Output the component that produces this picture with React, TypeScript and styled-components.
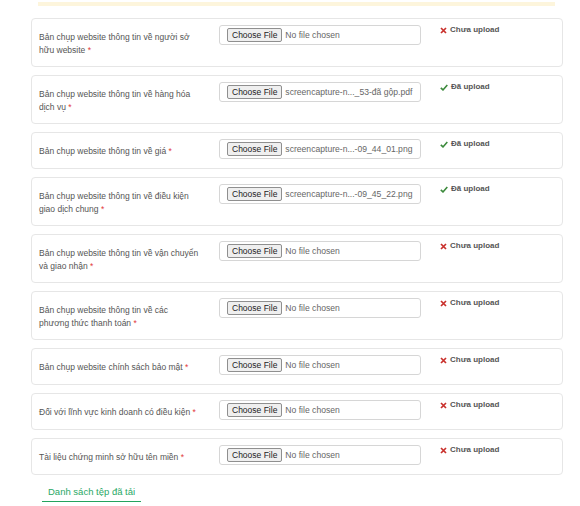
import React from 'react'
import styled, { createGlobalStyle } from 'styled-components'

const GlobalStyle = createGlobalStyle`
  body {
    margin: 0;
    background: #fff;
    font-family: "Liberation Sans", Arial, sans-serif;
  }
`

type Doc = {
  label: string
  file?: string
}

const docs: Doc[] = [
  { label: 'Bản chụp website thông tin về người sở hữu website' },
  { label: 'Bản chụp website thông tin về hàng hóa dịch vụ', file: 'screencapture-n..._53-đã gộp.pdf' },
  { label: 'Bản chụp website thông tin về giá', file: 'screencapture-n...-09_44_01.png' },
  { label: 'Bản chụp website thông tin về điều kiện giao dịch chung', file: 'screencapture-n...-09_45_22.png' },
  { label: 'Bản chụp website thông tin về vận chuyển và giao nhận' },
  { label: 'Bản chụp website thông tin về các phương thức thanh toán' },
  { label: 'Bản chụp website chính sách bảo mật' },
  { label: 'Đối với lĩnh vực kinh doanh có điều kiện' },
  { label: 'Tài liệu chứng minh sở hữu tên miền' },
]

function Row({ doc }: { doc: Doc }) {
  const done = !!doc.file
  return (
    <Card>
      <Label>
        {doc.label} <Req>*</Req>
      </Label>
      <InputCol>
        <FileBox>
          <PickButton type='button'>Choose File</PickButton>
          <FileName>{doc.file ?? 'No file chosen'}</FileName>
        </FileBox>
      </InputCol>
      <Status>
        {done ? (
          <svg width='8' height='7' viewBox='0 0 8 7'>
            <path d='M0.8 3.8 L3 5.9 L7.3 0.9' fill='none' stroke='#3c8a3c' strokeWidth='1.6' />
          </svg>
        ) : (
          <svg width='7' height='7' viewBox='0 0 7 7'>
            <path d='M1 1 L6 6 M6 1 L1 6' fill='none' stroke='#c9302c' strokeWidth='1.7' />
          </svg>
        )}
        <span>{done ? 'Đã upload' : 'Chưa upload'}</span>
      </Status>
    </Card>
  )
}

export default function App() {
  return (
    <>
      <GlobalStyle />
      <Page>
        <NoticeEdge />
        <List>
          {docs.map((d, i) => (
            <Row key={i} doc={d} />
          ))}
        </List>
        <Footer>
          <TabLink href='#'>Danh sách tệp đã tải</TabLink>
        </Footer>
      </Page>
    </>
  )
}

const Page = styled.div`
  width: 532px;
  padding: 2px 0 0 31px;
`

const NoticeEdge = styled.div`
  height: 4px;
  margin: 0 8px 0 7px;
  background: #fdf5dc;
`

const List = styled.div`
  display: flex;
  flex-direction: column;
  gap: 8px;
  margin-top: 12px;
`

const Card = styled.div`
  display: grid;
  grid-template-columns: 177px 222px 1fr;
  align-items: start;
  padding: 6px 0 9px;
  border: 1px solid #e6e6e6;
  border-radius: 4px;
  background: #fff;
`

const Label = styled.div`
  padding: 6px 9px 0 7px;
  font-size: 8.5px;
  line-height: 13px;
  color: #555;
`

const Req = styled.span`
  color: #e23a3a;
`

const InputCol = styled.div`
  padding: 0 10px;
`

const FileBox = styled.div`
  display: flex;
  align-items: center;
  gap: 3px;
  height: 20px;
  box-sizing: border-box;
  padding: 0 7px;
  border: 1px solid #d6d6d6;
  border-radius: 3px;
  background: #fff;
  overflow: hidden;
`

const PickButton = styled.button`
  height: 14px;
  padding: 0 4px;
  border: 1px solid #8f8f8f;
  border-radius: 2px;
  background: #efefef;
  font-family: "Liberation Sans", Arial, sans-serif;
  font-size: 8.5px;
  color: #222;
  line-height: 12px;
`

const FileName = styled.span`
  font-size: 8.6px;
  color: #666;
  white-space: nowrap;
`

const Status = styled.div`
  display: flex;
  align-items: center;
  gap: 3px;
  padding: 0 0 0 9px;
  font-size: 8px;
  font-weight: bold;
  line-height: 10px;
  color: #555;
`

const Footer = styled.div`
  padding: 6px 0 0 11px;
`

const TabLink = styled.a`
  display: inline-block;
  padding: 0 6px 3px;
  border-bottom: 1.5px solid #23a35e;
  font-size: 9.5px;
  line-height: 12px;
  color: #2ba866;
  text-decoration: none;
`
